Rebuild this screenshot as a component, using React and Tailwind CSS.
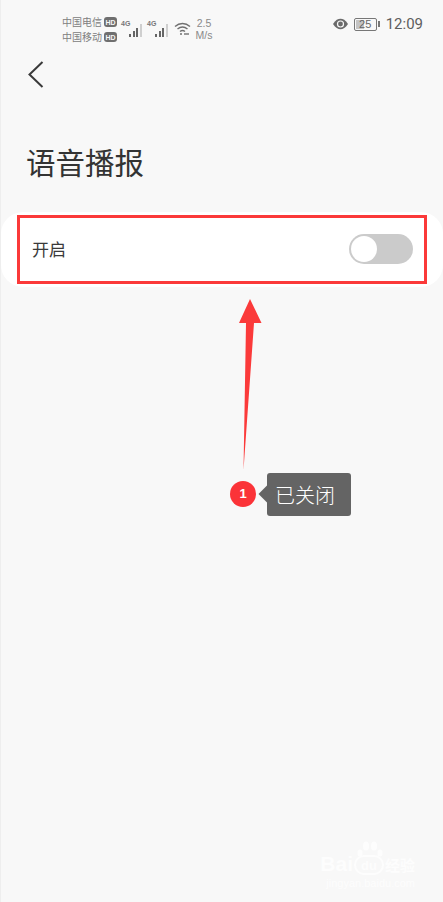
import React from 'react';

const cjk = "font-['Noto_Sans_CJK_SC','Noto_Sans',sans-serif]";

function HdBadge() {
  return (
    <span className="ml-[2px] flex h-[10px] w-[13px] items-center justify-center rounded-[3px] bg-[#6f6f6f] font-['Liberation_Sans',sans-serif] text-[7px] font-bold leading-none text-[#f8f8f8]">
      HD
    </span>
  );
}

function Signal({ bars = 3 }) {
  const heights = [3, 6, 9, 13];
  return (
    <div className="relative h-[20px] w-[26px]">
      <span className="absolute left-0 top-[1px] font-['Liberation_Sans',sans-serif] text-[7px] font-bold leading-[8px] text-[#777]">4G</span>
      <div className="absolute bottom-[2px] left-[8px] flex items-end gap-[1.5px]">
        {heights.map((h, i) => (
          <span
            key={i}
            className={i < bars ? 'w-[2px] bg-[#666]' : 'w-[2px] bg-[#cfcfcf]'}
            style={{ height: h }}
          />
        ))}
      </div>
    </div>
  );
}

function StatusBar() {
  return (
    <div className="flex h-[42px] items-start justify-between pl-[61px] pr-[20px] pt-[15px]">
      <div className="flex items-start">
        <div className={`flex flex-col gap-[1px] ${cjk} text-[10px] leading-[14px] text-[#808080]`}>
          <div className="flex items-center">中国电信<HdBadge /></div>
          <div className="flex items-center">中国移动<HdBadge /></div>
        </div>
        <div className="ml-[4px] mt-[4px] flex">
          <Signal />
          <Signal />
        </div>
        <svg className="ml-[1px] mt-[7px]" width="17" height="14" viewBox="0 0 17 14" fill="none" stroke="#707070" strokeWidth="1.4">
          <path d="M1 4.5C5.5 0.5 11.5 0.5 16 4.5" />
          <path d="M3.5 7C6.5 4.5 10.5 4.5 13.5 7" />
          <path d="M6 9.5C7.5 8.3 9.5 8.3 11 9.5" />
          <circle cx="7" cy="12" r="1" fill="#707070" stroke="none" />
          <path d="M10 12H15" />
        </svg>
        <div className="ml-[3px] mt-[2px] w-[20px] text-center font-['Liberation_Sans',sans-serif] text-[10.500px] leading-[12px] text-[#8a8a8a]">
          2.5<br />M/s
        </div>
      </div>
      <div className="flex items-center">
        <svg width="17" height="12" viewBox="0 0 16 12">
          <path d="M0.5 6C3 2 5.5 0.8 8 0.8S13 2 15.5 6C13 10 10.500 11.200 8 11.200S3 10 0.500 6Z" fill="#6a6a6a" />
          <circle cx="8" cy="6" r="3.600" fill="#f8f8f8" />
          <circle cx="8" cy="6" r="2.400" fill="#6a6a6a" />
        </svg>
        <div className="relative ml-[5px] flex h-[13px] w-[23px] items-center justify-center rounded-[2px] border border-[#777] font-['Liberation_Sans',sans-serif] text-[11px] leading-none text-[#666]">
          <span className="absolute bottom-[1px] left-[1px] top-[1px] w-[8px] bg-[#c4c4c4]" />
          <span className="relative">25</span>
        </div>
        <span className="ml-[1px] h-[6px] w-[2px] bg-[#777]" />
        <span className="ml-[6px] font-['Roboto',sans-serif] text-[15px] leading-[18px] text-[#5e5e5e]">12:09</span>
      </div>
    </div>
  );
}

function Toggle() {
  return (
    <div className="flex h-[30px] w-[64px] items-center rounded-full bg-[#cbcbcb] p-[2px]">
      <span className="h-[26px] w-[26px] rounded-full bg-white" />
    </div>
  );
}

function Annotation() {
  return (
    <>
      <div className="absolute left-[16px] top-[215px] h-[69px] w-[410px] border-[3px] border-[#fb3939]" />
      <svg className="absolute left-[234px] top-[295px]" width="30" height="180" viewBox="0 0 30 180">
        <path d="M15 4L26.500 28H19L8.500 175L11 28H4Z" fill="#fb3a3a" />
      </svg>
      <div className="absolute left-[229px] top-[481px] flex h-[26px] w-[26px] items-center justify-center rounded-full bg-[#fb3338] font-['Liberation_Sans',sans-serif] text-[13px] font-bold text-white">
        1
      </div>
      <div className="absolute left-[266px] top-[473px] flex h-[43px] w-[84px] items-center justify-center rounded-[3px] bg-[#646464] pr-[8px]">
        <span className="absolute left-[-6px] top-[15px] h-[12px] w-[12px] rotate-45 bg-[#646464]" />
        <span className={`relative ${cjk} text-[20px] font-light text-white`}>已关闭</span>
      </div>
    </>
  );
}

function Watermark() {
  return (
    <div className="absolute bottom-[13px] right-[28px] flex flex-col items-end text-[#fdfdfd]">
      <div className="flex items-end font-['Liberation_Sans',sans-serif] text-[21px] font-bold leading-[22px]">
        <span>Bai</span>
        <span className="relative mx-[1px] flex h-[20px] w-[30px] items-end justify-center rounded-[10px] border-2 border-[#fdfdfd] text-[13px] leading-[14px]">
          du
          <svg className="absolute left-[1px] top-[-16px]" width="26" height="20" viewBox="0 0 26 20" fill="#fdfdfd">
            <ellipse cx="3" cy="12" rx="2.500" ry="3.500" />
            <ellipse cx="9" cy="5" rx="3" ry="4.500" />
            <ellipse cx="17" cy="5" rx="3" ry="4.500" />
            <ellipse cx="23" cy="12" rx="2.500" ry="3.500" />
          </svg>
        </span>
        <span className={`${cjk} text-[15px] leading-[20px]`}>经验</span>
      </div>
      <div className="mt-[2px] font-['Liberation_Sans',sans-serif] text-[11px] leading-[12px]">jingyan.baidu.com</div>
    </div>
  );
}

export default function App() {
  return (
    <div className="relative h-[902px] w-[443px] overflow-hidden border-l border-[#eeeeee] bg-[#f8f8f8]">
      <StatusBar />
      <div className="pl-[26px] pt-[18px]">
        <svg width="18" height="28" viewBox="0 0 18 28" fill="none" stroke="#3a3a3a" strokeWidth="2">
          <path d="M15.500 2L2.500 14.500L15.500 27" />
        </svg>
      </div>
      <h1 className={`mt-[53px] pl-[25px] ${cjk} text-[29.500px] font-normal leading-[40px] text-[#333]`}>语音播报</h1>
      <div className="mt-[31px] flex h-[75px] items-center justify-between rounded-[22px] bg-white pb-[2px] pl-[31px] pr-[30px]">
        <span className={`${cjk} text-[17px] text-[#3a3a3a]`}>开启</span>
        <Toggle />
      </div>
      <Annotation />
      <Watermark />
    </div>
  );
}
